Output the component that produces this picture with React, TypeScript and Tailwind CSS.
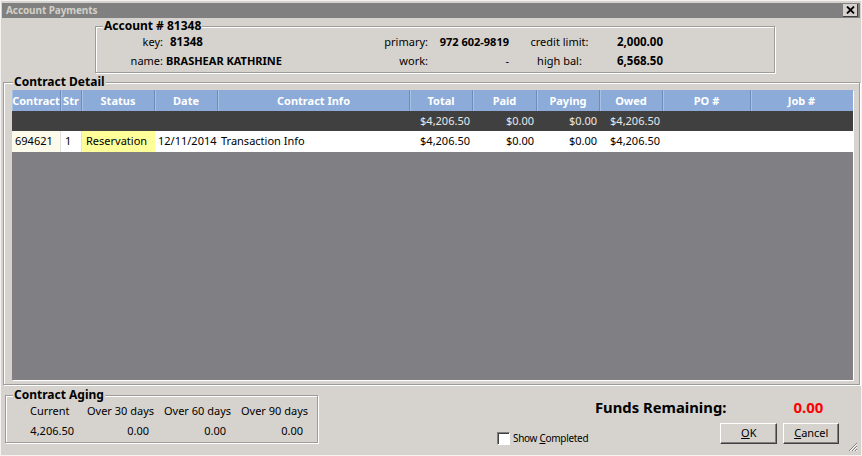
import React from "react";

const gridCols = "grid grid-cols-[49px_21px_73px_63px_192px_63px_64px_63px_63px_88px_101px]";

function GroupTitle({ children, className = "" }: { children: React.ReactNode; className?: string }) {
  return (
    <span className={"absolute -top-[9px] bg-[#d6d3ce] px-[1px] text-[12px] font-bold leading-[16px] text-black " + className}>
      {children}
    </span>
  );
}

export default function App() {
  const headers = ["Contract", "Str", "Status", "Date", "Contract Info", "Total", "Paid", "Paying", "Owed", "PO #", "Job #"];
  return (
    <div
      className="relative flex h-[456px] w-[862px] flex-col overflow-hidden border border-[#f4f3f1] bg-[#d6d3ce] text-[11px] text-black"
      style={{ fontFamily: '"Noto Sans", "Open Sans", sans-serif' }}
    >
      {/* title bar */}
      <div className="mx-[1px] mt-[2px] flex h-[15px] items-center justify-between bg-[#808080] pl-[4px] pr-[2px]">
        <span className="text-[10px] font-bold leading-[15px] tracking-[-0.1px] text-[#d4d0c8]">Account Payments</span>
        <span className="flex h-[13px] w-[15px] items-center justify-center border-b border-r border-[#404040] border-l-white border-t-white bg-[#d6d3ce]">
          <svg width="9" height="8" viewBox="0 0 9 8">
            <path d="M1 0.5 L8 7.5 M8 0.5 L1 7.5" stroke="#000" strokeWidth="1.8" />
          </svg>
        </span>
      </div>

      {/* account box */}
      <div className="ml-[94px] mt-[8px] h-[47px] w-[680px]">
        <div className="relative h-full border border-[#9e9c98] shadow-[inset_1px_1px_0_#fff,1px_1px_0_#fff]">
          <GroupTitle className="left-[7px]">Account # 81348</GroupTitle>
          <div className="grid grid-cols-[67px_217px_48px_81px_101px_53px] pt-[5px] leading-[19px]">
            <span className="text-right">key:</span>
            <span className="pl-[7px] text-[11.5px] font-bold">81348</span>
            <span className="text-right">primary:</span>
            <span className="text-right text-[11px] font-bold">972 602-9819</span>
            <span className="text-center">credit limit:</span>
            <span className="text-right text-[11.5px] font-bold">2,000.00</span>
            <span className="text-right">name:</span>
            <span className="pl-[3px] text-[11px] font-bold">BRASHEAR KATHRINE</span>
            <span className="text-right">work:</span>
            <span className="text-right">-</span>
            <span className="text-center">high bal:</span>
            <span className="text-right text-[11.5px] font-bold">6,568.50</span>
          </div>
        </div>
      </div>

      {/* contract detail */}
      <div className="ml-[2px] mt-[9px] h-[303px] w-[857px]">
        <div className="relative flex h-full flex-col border border-[#9e9c98] pb-[4px] pl-[8px] pr-[6px] pt-[7px] shadow-[inset_1px_1px_0_#fff,1px_1px_0_#fff]">
          <GroupTitle className="left-[9px]">Contract Detail</GroupTitle>
          <div className="flex flex-1 flex-col bg-[#807f83] shadow-[1px_1px_0_#fff]">
            <div className={gridCols + " h-[21px] bg-[#8cabd8] font-bold text-white"}>
              {headers.map((h, i) => (
                <span
                  key={h}
                  className={
                    "flex items-center justify-center border-r border-[#6f8cb8] shadow-[inset_1px_0_0_#a9c2e4] leading-none" +
                    (i === headers.length - 1 ? " border-r-0" : "")
                  }
                >
                  {h}
                </span>
              ))}
            </div>
            <div className={gridCols + " h-[20px] items-center bg-[#404040] text-[#e8e8e8]"}>
              <span />
              <span />
              <span />
              <span />
              <span />
              <span className="pr-[3px] text-right">$4,206.50</span>
              <span className="pr-[3px] text-right">$0.00</span>
              <span className="pr-[3px] text-right">$0.00</span>
              <span className="pr-[3px] text-right">$4,206.50</span>
              <span />
              <span />
            </div>
            <div className={gridCols + " h-[21px] bg-white text-black"}>
              <span className="flex items-center border-r border-[#e4e2dc] bg-[#fcfaeb] pl-[3px]">694621</span>
              <span className="flex items-center border-r border-[#e4e2dc] pl-[4px]">1</span>
              <span className="flex items-center bg-[#ffff99] pl-[4px]">Reservation</span>
              <span className="flex items-center pl-[3px]">12/11/2014</span>
              <span className="flex items-center pl-[3px]">Transaction Info</span>
              <span className="flex items-center justify-end pr-[3px]">$4,206.50</span>
              <span className="flex items-center justify-end pr-[3px]">$0.00</span>
              <span className="flex items-center justify-end pr-[3px]">$0.00</span>
              <span className="flex items-center justify-end pr-[3px]">$4,206.50</span>
              <span />
              <span />
            </div>
          </div>
        </div>
      </div>

      {/* bottom area */}
      <div className="flex flex-1">
        <div className="ml-[4px] mt-[10px] h-[48px] w-[313px]">
          <div className="relative h-full border border-[#9e9c98] shadow-[inset_1px_1px_0_#fff,1px_1px_0_#fff]">
            <GroupTitle className="left-[7px] -top-[8px]">Contract Aging</GroupTitle>
            <div className="grid grid-cols-[74px_77px_77px_77px] pl-[2px] pt-[5px] leading-[20px]">
              <span className="pl-[22px]">Current</span>
              <span className="text-center">Over 30 days</span>
              <span className="text-center">Over 60 days</span>
              <span className="text-center">Over 90 days</span>
              <span className="pr-[8px] text-right">4,206.50</span>
              <span className="pr-[10px] text-right">0.00</span>
              <span className="pr-[10px] text-right">0.00</span>
              <span className="pr-[10px] text-right">0.00</span>
            </div>
          </div>
        </div>

        <div className="flex flex-1 flex-col">
          <div className="mt-[12px] flex h-[20px] items-center">
            <span className="ml-[277px] text-[14.8px] font-bold">Funds Remaining:</span>
            <span className="ml-[67px] text-[15px] font-bold text-[#ff0000]">0.00</span>
          </div>
          <div className="mt-[6px] flex items-start">
            <div className="ml-[179px] mt-[8px] flex items-center gap-[3px]">
              <span className="h-[13px] w-[13px] border border-b-white border-l-[#808080] border-r-white border-t-[#808080] bg-white shadow-[inset_1px_1px_0_#404040]" />
              <span className="text-[10px] tracking-[-0.3px]">
                Show <span className="underline">C</span>ompleted
              </span>
            </div>
            <button className="ml-[132px] h-[21px] w-[57px] border border-b-[#404040] border-l-white border-r-[#404040] border-t-white bg-[#d6d3ce] text-[11px] shadow-[inset_-1px_-1px_0_#808080]">
              <span className="underline">O</span>K
            </button>
            <button className="ml-[6px] h-[21px] w-[56px] border border-b-[#404040] border-l-white border-r-[#404040] border-t-white bg-[#d6d3ce] text-[11px] shadow-[inset_-1px_-1px_0_#808080]">
              <span className="underline">C</span>ancel
            </button>
          </div>
        </div>
      </div>

      {/* resize grip */}
      <svg className="absolute bottom-[3px] right-[3px]" width="11" height="11" viewBox="0 0 11 11">
        <path d="M10 2 L2 10 M10 5 L5 10 M10 8 L8 10" stroke="#808080" strokeWidth="1" />
        <path d="M10 3 L3 10 M10 6 L6 10 M10 9 L9 10" stroke="#fff" strokeWidth="1" />
      </svg>
    </div>
  );
}
